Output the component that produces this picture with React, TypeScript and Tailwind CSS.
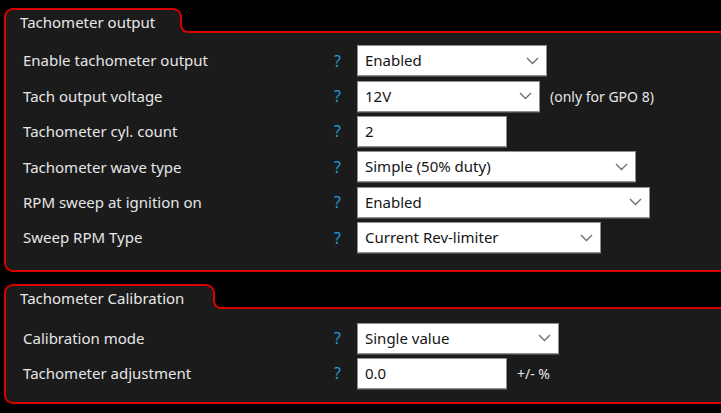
import React from "react";

type Row = {
  label: string;
  kind: "select" | "input";
  value: string;
  width: string;
  suffix?: string;
};

const Chevron = () => (
  <svg width="13" height="8" viewBox="0 0 13 8" className="shrink-0">
    <polyline points="1,1 6.5,6.5 12,1" fill="none" stroke="#6f6f6f" strokeWidth="1.4" />
  </svg>
);

function Field({ row }: { row: Row }) {
  return (
    <div className={`flex items-center h-[31px] bg-white border border-[#8e8e8e] shadow-[0_1px_0_#4a4a4a] pl-[7px] pr-[7px] ${row.width}`}>
      <span className="flex-1 text-[#151515] text-[15px] leading-none">{row.value}</span>
      {row.kind === "select" && <Chevron />}
    </div>
  );
}

function Panel({
  title,
  tabWidth,
  rows,
  bodyPad,
}: {
  title: string;
  tabWidth: string;
  rows: Row[];
  bodyPad: string;
}) {
  return (
    <div className="flex flex-col">
      <div className="flex h-[25px]">
        <div className={`${tabWidth} bg-[#1b1b1b] border-t-2 border-l-2 border-r-2 border-[#d90000] rounded-t-[9px] pl-[14px] pt-[2px] text-[15px] text-[#e8e8e8] leading-[20px]`}>
          {title}
        </div>
        <div className="flex-1 mt-[13px] -ml-[2px] bg-[#1b1b1b]">
          <div className="h-full bg-black border-l-2 border-b-2 border-[#d90000] rounded-bl-[8px]" />
        </div>
      </div>
      <div className={`bg-[#1b1b1b] border-l-2 border-b-2 border-[#d90000] rounded-bl-[9px] ${bodyPad}`}>
        {rows.map((r) => (
          <div key={r.label} className="flex items-center h-[35.4px]">
            <div className="w-[313px] pl-[17px] text-[15px] text-[#e6e6e6]">{r.label}</div>
            <div className="w-[38px] text-[16px] text-[#1e9ad8] pl-[15px]">?</div>
            <Field row={r} />
            {r.suffix && <span className="ml-[10px] text-[14px] text-[#e6e6e6]">{r.suffix}</span>}
          </div>
        ))}
      </div>
    </div>
  );
}

export default function App() {
  const rows1: Row[] = [
    { label: "Enable tachometer output", kind: "select", value: "Enabled", width: "w-[190px]" },
    { label: "Tach output voltage", kind: "select", value: "12V", width: "w-[183px]", suffix: "(only for GPO 8)" },
    { label: "Tachometer cyl. count", kind: "input", value: "2", width: "w-[150px]" },
    { label: "Tachometer wave type", kind: "select", value: "Simple (50% duty)", width: "w-[279px]" },
    { label: "RPM sweep at ignition on", kind: "select", value: "Enabled", width: "w-[293px]" },
    { label: "Sweep RPM Type", kind: "select", value: "Current Rev-limiter", width: "w-[244px]" },
  ];
  const rows2: Row[] = [
    { label: "Calibration mode", kind: "select", value: "Single value", width: "w-[202px]" },
    { label: "Tachometer adjustment", kind: "input", value: "0.0", width: "w-[150px]", suffix: "+/- %" },
  ];
  return (
    <div
      className="w-[721px] h-[413px] bg-black pl-[4px] pt-[8px] overflow-hidden flex flex-col gap-[12px]"
      style={{ fontFamily: '"Noto Sans", "Open Sans", sans-serif' }}
    >
      <Panel title="Tachometer output" tabWidth="w-[178px]" rows={rows1} bodyPad="pt-[10px] pb-[15px]" />
      <Panel title="Tachometer Calibration" tabWidth="w-[211px]" rows={rows2} bodyPad="pt-[11px] pb-[11px]" />
    </div>
  );
}
